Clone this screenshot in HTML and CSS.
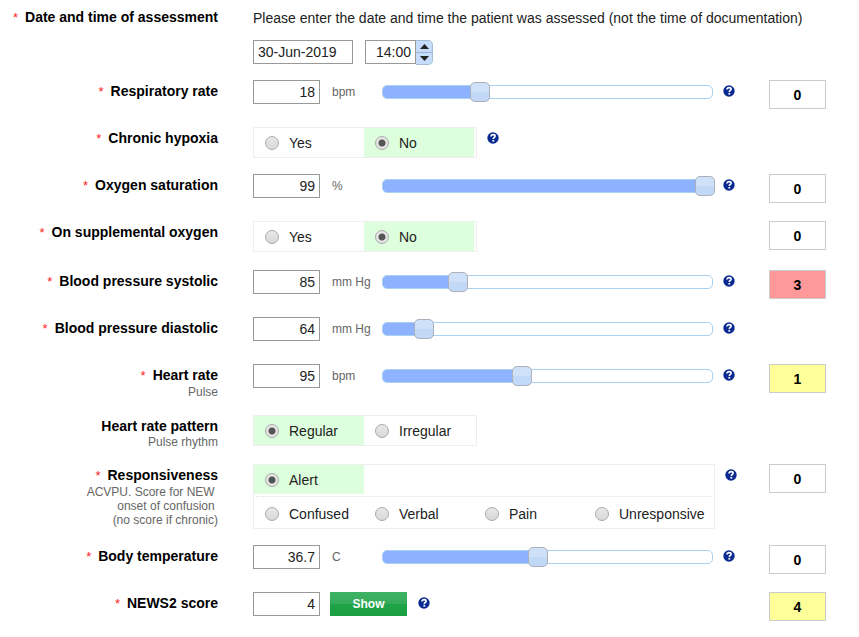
FILE: index.html
```html
<!DOCTYPE html>
<html lang="en">
<head>
<meta charset="utf-8">
<meta name="viewport" content="width=device-width, initial-scale=1">
<title>NEWS2 assessment</title>
<link rel="stylesheet" href="styles.css">
</head>
<body>
<svg class="defs" width="0" height="0" aria-hidden="true">
  <symbol id="help" viewBox="0 0 12 12">
    <circle cx="6" cy="6" r="5.7" fill="#0a2a92"/>
    <path d="M4 4.5C4.1 3.2 4.9 2.6 6.1 2.6C7.4 2.6 8.1 3.3 8.1 4.2C8.1 5.4 6.3 5.5 6.3 7" fill="none" stroke="#fff" stroke-width="1.6"/>
    <rect x="5.4" y="7.9" width="1.8" height="1.7" fill="#fff"/>
  </symbol>
</svg>
<form class="form">
  <div class="row">
    <div class="label"><span class="req">*</span><label for="date">Date and time of assessment</label></div>
    <div class="stack">
      <p class="intro">Please enter the date and time the patient was assessed (not the time of documentation)</p>
      <div class="when">
        <input class="box date" id="date" type="text" value="30-Jun-2019">
        <div class="time">
          <input class="box clock" type="text" value="14:00" aria-label="Time">
          <div class="spin">
            <button type="button" aria-label="Later"><svg width="9" height="5" viewBox="0 0 9 5"><path d="M4.5 0L9 5H0Z"/></svg></button>
            <button type="button" aria-label="Earlier"><svg width="9" height="5" viewBox="0 0 9 5"><path d="M0 0H9L4.5 5Z"/></svg></button>
          </div>
        </div>
      </div>
    </div>
  </div>

  <div class="row">
    <div class="label"><span class="req">*</span><label for="rr">Respiratory rate</label></div>
    <div class="field">
      <input class="box" id="rr" type="text" value="18"><span class="unit">bpm</span>
      <div class="slider" style="--fill:30%"><input type="range" min="0" max="61" value="18" aria-label="Respiratory rate"></div>
      <button class="help" type="button" aria-label="Help"><svg><use href="#help"/></svg></button>
    </div>
    <output class="score">0</output>
  </div>

  <div class="row">
    <div class="label"><span class="req">*</span><span>Chronic hypoxia</span></div>
    <div class="field">
      <div class="group" role="radiogroup" aria-label="Chronic hypoxia">
        <div class="options">
          <label class="option"><input type="radio" name="hypoxia">Yes</label>
          <label class="option"><input type="radio" name="hypoxia" checked>No</label>
        </div>
      </div>
      <button class="help" type="button" aria-label="Help"><svg><use href="#help"/></svg></button>
    </div>
  </div>

  <div class="row">
    <div class="label"><span class="req">*</span><label for="spo2">Oxygen saturation</label></div>
    <div class="field">
      <input class="box" id="spo2" type="text" value="99"><span class="unit">%</span>
      <div class="slider" style="--fill:98%"><input type="range" min="50" max="100" value="99" aria-label="Oxygen saturation"></div>
      <button class="help" type="button" aria-label="Help"><svg><use href="#help"/></svg></button>
    </div>
    <output class="score">0</output>
  </div>

  <div class="row tall">
    <div class="label"><span class="req">*</span><span>On supplemental oxygen</span></div>
    <div class="field">
      <div class="group" role="radiogroup" aria-label="On supplemental oxygen">
        <div class="options">
          <label class="option"><input type="radio" name="oxygen">Yes</label>
          <label class="option"><input type="radio" name="oxygen" checked>No</label>
        </div>
      </div>
    </div>
    <output class="score">0</output>
  </div>

  <div class="row">
    <div class="label"><span class="req">*</span><label for="sys">Blood pressure systolic</label></div>
    <div class="field">
      <input class="box" id="sys" type="text" value="85"><span class="unit">mm Hg</span>
      <div class="slider" style="--fill:23%"><input type="range" min="30" max="270" value="85" aria-label="Blood pressure systolic"></div>
      <button class="help" type="button" aria-label="Help"><svg><use href="#help"/></svg></button>
    </div>
    <output class="score high">3</output>
  </div>

  <div class="row">
    <div class="label"><span class="req">*</span><label for="dia">Blood pressure diastolic</label></div>
    <div class="field">
      <input class="box" id="dia" type="text" value="64"><span class="unit">mm Hg</span>
      <div class="slider" style="--fill:13%"><input type="range" min="30" max="300" value="64" aria-label="Blood pressure diastolic"></div>
      <button class="help" type="button" aria-label="Help"><svg><use href="#help"/></svg></button>
    </div>
  </div>

  <div class="row block">
    <div class="label"><span class="req">*</span><label for="hr">Heart rate</label><small>Pulse</small></div>
    <div class="field">
      <input class="box" id="hr" type="text" value="95"><span class="unit">bpm</span>
      <div class="slider" style="--fill:42%"><input type="range" min="0" max="225" value="95" aria-label="Heart rate"></div>
      <button class="help" type="button" aria-label="Help"><svg><use href="#help"/></svg></button>
    </div>
    <output class="score low">1</output>
  </div>

  <div class="row tall">
    <div class="label"><span>Heart rate pattern</span><small>Pulse rhythm</small></div>
    <div class="field">
      <div class="group" role="radiogroup" aria-label="Heart rate pattern">
        <div class="options">
          <label class="option"><input type="radio" name="pattern" checked>Regular</label>
          <label class="option"><input type="radio" name="pattern">Irregular</label>
        </div>
      </div>
    </div>
  </div>

  <div class="row block">
    <div class="label"><span class="req">*</span><span>Responsiveness</span><small>ACVPU. Score for NEW&nbsp;<br>onset of confusion&nbsp;<br>(no score if chronic)</small></div>
    <div class="field">
      <div class="group wide" role="radiogroup" aria-label="Responsiveness">
        <div class="options">
          <label class="option"><input type="radio" name="acvpu" checked>Alert</label>
        </div>
        <div class="options more">
          <label class="option"><input type="radio" name="acvpu">Confused</label>
          <label class="option"><input type="radio" name="acvpu">Verbal</label>
          <label class="option"><input type="radio" name="acvpu">Pain</label>
          <label class="option"><input type="radio" name="acvpu">Unresponsive</label>
        </div>
      </div>
      <button class="help" type="button" aria-label="Help"><svg><use href="#help"/></svg></button>
    </div>
    <output class="score">0</output>
  </div>

  <div class="row">
    <div class="label"><span class="req">*</span><label for="temp">Body temperature</label></div>
    <div class="field">
      <input class="box" id="temp" type="text" value="36.7"><span class="unit">C</span>
      <div class="slider" style="--fill:47%"><input type="range" min="32" max="42" step="0.1" value="36.7" aria-label="Body temperature"></div>
      <button class="help" type="button" aria-label="Help"><svg><use href="#help"/></svg></button>
    </div>
    <output class="score">0</output>
  </div>

  <div class="row">
    <div class="label"><span class="req">*</span><label for="news">NEWS2 score</label></div>
    <div class="field">
      <input class="box" id="news" type="text" value="4">
      <button class="show" type="button">Show</button>
      <button class="help" type="button" aria-label="Help"><svg><use href="#help"/></svg></button>
    </div>
    <output class="score low">4</output>
  </div>
</form>
</body>
</html>
```
FILE: styles.css
```css
* { box-sizing: border-box; }

body {
  margin: 0;
  background: #fff;
  color: #222;
  font: 14px/18px "Liberation Sans", Arial, sans-serif;
}

input, button { font: inherit; color: inherit; margin: 0; }

.defs { position: absolute; }

.form { padding: 6px 33px 0 0; }

.row {
  display: grid;
  grid-template-columns: 219px 1fr 57px;
  column-gap: 34px;
  align-items: start;
  min-height: 47px;
  padding-bottom: 14px;
}
.tall { min-height: 49px; }
.block {
  min-height: 50px;
  padding-bottom: 16px;
}

.label {
  padding: 2px 1px 0 0;
  text-align: right;
  font-weight: bold;
  color: #000;
}
.label small {
  display: block;
  font-size: 12px;
  line-height: 14px;
  font-weight: normal;
  color: #666;
}
.req {
  margin-right: 7px;
  font-size: 13px;
  font-weight: normal;
  color: #f22;
}

.stack { grid-column: 2 / 4; padding-bottom: 1px; }
.intro { margin: 0 0 10px; line-height: 24px; }
.when { display: flex; gap: 12px; }
.time { display: flex; }

.field { display: flex; align-items: flex-start; min-width: 0; }

.box {
  flex: none;
  width: 67px;
  height: 24px;
  padding: 0 4px;
  border: 1px solid #999;
  background: #fff;
  text-align: right;
}
.date { width: 100px; text-align: left; }
.clock { width: 51px; }

.spin {
  display: flex;
  flex-direction: column;
  width: 17px;
  height: 25px;
  border: 1px solid #a3bbd6;
  border-left: 0;
  border-radius: 0 5px 5px 0;
  background: #c5dcfa;
  overflow: hidden;
}
.spin button {
  flex: 1;
  display: flex;
  align-items: center;
  justify-content: center;
  padding: 0;
  border: 0;
  background: none;
}
.spin button + button { border-top: 1px solid #a0b4cc; }
.spin path { fill: #222; }

.unit {
  flex: none;
  width: 62px;
  padding: 3px 0 0 12px;
  font-size: 12px;
  color: #666;
}

.slider {
  flex: 1;
  display: flex;
  align-items: center;
  height: 14px;
  margin-top: 5px;
  border: 1px solid #a9d0ee;
  border-radius: 5px;
  background: linear-gradient(to right, #8db2ff var(--fill), #fff var(--fill));
}
.slider input {
  appearance: none;
  flex: none;
  width: calc(100% + 20px);
  height: 20px;
  margin: 0 -10px;
  background: none;
}
.slider input::-webkit-slider-thumb {
  appearance: none;
  width: 20px;
  height: 20px;
  border: 1px solid #abb0ba;
  border-radius: 5px;
  background: linear-gradient(#cfe0f9 50%, #c2d8f7 50%);
}

.help {
  flex: none;
  width: 12px;
  height: 12px;
  margin: 5px 0 0 10px;
  padding: 0;
  border: 0;
  background: none;
}
.help svg { display: block; width: 12px; height: 12px; }

.group {
  flex: none;
  padding-right: 2px;
  border: 1px solid #eee;
}
.options { display: flex; }
.option {
  display: flex;
  align-items: center;
  gap: 10px;
  width: 110px;
  height: 29px;
  padding-left: 11px;
}
.option:has(:checked) { background: #dfd; }
.wide .option:last-child:not(:first-child) { width: 128px; }
.more {
  margin: 2px 0 0 2px;
  padding: 2px 0 0;
  border-top: 1px dotted #e4e4e4;
}
.more .option:first-child { width: 108px; padding-left: 9px; }
.option input {
  appearance: none;
  flex: none;
  width: 14px;
  height: 14px;
  border: 1px solid #aaa;
  border-radius: 50%;
  background: linear-gradient(#e8e8e8, #d8d8d8);
}
.option input:checked {
  background: radial-gradient(circle, #555 3px, #e4e4e4 4px);
}

.score {
  grid-column: 3;
  height: 29px;
  border: 1px solid #ccc;
  background: #fff;
  color: #000;
  font-weight: bold;
  line-height: 28px;
  text-align: center;
}
.high { background: #f99; }
.low { background: #ff9; }

.show {
  width: 77px;
  height: 24px;
  margin: 0 1px 0 10px;
  padding: 0;
  border: 0;
  background: linear-gradient(#3fb365, #34ab59 50%, #1fa348 50%, #1a9f43);
  color: #fff;
  font-size: 12px;
  font-weight: bold;
}
```
